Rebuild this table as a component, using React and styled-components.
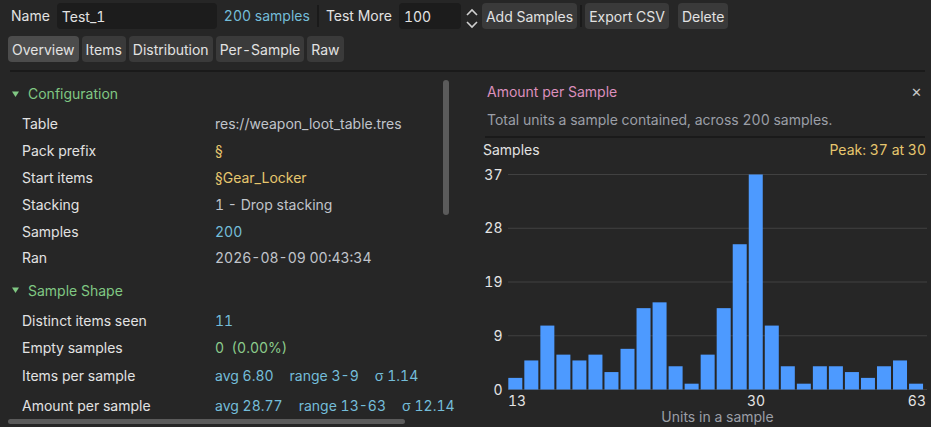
import React from "react";
import styled, { createGlobalStyle } from "styled-components";

const GlobalStyle = createGlobalStyle`
  html, body {
    margin: 0;
    padding: 0;
    background: #262626;
  }
  body {
    font-family: Inter, "Noto Sans", sans-serif;
    font-size: 14px;
    font-variant-numeric: tabular-nums;
    color: #e2e2e2;
  }
`;

const tones = {
  plain: "#e2e2e2",
  dim: "#c0c4cb",
  blue: "#74bdd9",
  yellow: "#e6c66e",
  green: "#8ccc8c",
  pink: "#dc8fbd",
  grey: "#9b9fa7",
};

const Page = styled.div`
  width: 931px;
  height: 427px;
  overflow: hidden;
  display: flex;
  flex-direction: column;
  background: #262626;
`;

const Toolbar = styled.div`
  display: flex;
  align-items: center;
  height: 26px;
  margin-top: 3px;
  padding-left: 11px;
`;

const Label = styled.span`
  margin-left: ${(p) => p.$ml || 0}px;
  color: ${(p) => tones[p.$tone || "plain"]};
  white-space: nowrap;
  line-height: 20px;
`;

const Field = styled.div`
  box-sizing: border-box;
  width: ${(p) => p.$w}px;
  height: 26px;
  margin-left: ${(p) => p.$ml || 0}px;
  padding: 0 5px;
  display: flex;
  align-items: center;
  background: #1c1c1c;
  border-radius: 4px;
  color: #e2e2e2;
`;

const VSep = styled.div`
  width: 2px;
  height: 22px;
  margin-left: ${(p) => p.$ml || 0}px;
  background: #1a1a1a;
`;

const Button = styled.button`
  box-sizing: border-box;
  height: 26px;
  margin-left: ${(p) => p.$ml || 0}px;
  padding: 0 4px;
  border: none;
  border-radius: 4px;
  background: ${(p) => (p.$active ? "#4c4c4c" : "#3a3a3a")};
  color: #e2e2e2;
  font: inherit;
  white-space: nowrap;
  cursor: pointer;
`;

const Spinner = styled.svg`
  display: block;
  margin-left: 3px;
  flex: none;
`;

const Tabs = styled.div`
  display: flex;
  gap: 3px;
  height: 26px;
  margin-top: 7px;
  padding-left: 8px;
`;

const Divider = styled.div`
  height: 2px;
  margin: ${(p) => p.$m};
  background: #1a1a1a;
`;

const Body = styled.div`
  flex: 1;
  display: flex;
  min-height: 0;
`;

const LeftPanel = styled.div`
  position: relative;
  width: 458px;
  overflow: hidden;
  padding-top: 8px;
`;

const SectionHead = styled.div`
  display: flex;
  align-items: center;
  gap: 9px;
  height: 27px;
  margin: ${(p) => (p.$first ? "0 0 4px" : "5px 0 4px")};
  padding-left: 12px;
  color: #80c883;
  white-space: nowrap;
`;

const Row = styled.div`
  display: grid;
  grid-template-columns: 193px auto;
  align-items: center;
  height: ${(p) => p.$h || 26.8}px;
  padding-left: 22px;
  white-space: nowrap;
`;

const ValueGroup = styled.div`
  display: flex;
  gap: 16px;
`;

const VScroll = styled.div`
  position: absolute;
  top: 8px;
  left: 443px;
  width: 6px;
  height: 135px;
  border-radius: 3px;
  background: #5b5b5b;
`;

const HScroll = styled.div`
  position: absolute;
  left: 8px;
  bottom: 3px;
  width: 397px;
  height: 5px;
  border-radius: 3px;
  background: #5b5b5b;
`;

const RightPanel = styled.div`
  flex: 1;
  margin-left: 12px;
  display: flex;
  flex-direction: column;
  padding-top: 10px;
`;

const TitleRow = styled.div`
  display: flex;
  justify-content: space-between;
  align-items: center;
  height: 20px;
  padding: 0 9px 0 17px;
`;

const Close = styled.span`
  color: #c8c8c8;
  font-size: 13px;
`;

const Subtitle = styled.div`
  height: 20px;
  line-height: 20px;
  margin-top: 8px;
  padding-left: 17px;
  color: ${tones.grey};
`;

const ChartHead = styled.div`
  display: flex;
  justify-content: space-between;
  height: 20px;
  line-height: 20px;
  margin-top: 2px;
  padding: 0 5px 0 13px;
`;

const Chart = styled.svg`
  display: block;
  margin-left: 13px;
  font-family: Inter, "Noto Sans", sans-serif;
  font-size: 14px;
`;

const Caption = styled.div`
  height: 14px;
  line-height: 14px;
  margin-top: 2px;
  padding: 0 4px 0 38px;
  text-align: center;
  color: ${tones.grey};
  white-space: nowrap;
`;

const counts = [
  2, 5, 11, 6, 5, 6, 3, 7, 14, 15, 4, 1, 6, 14, 25, 37, 11, 4, 1, 4, 4, 3, 2, 4,
  5, 1,
];

const config = [
  ["Table", "res://weapon_loot_table.tres", "dim"],
  ["Pack prefix", "§", "yellow"],
  ["Start items", "§Gear_Locker", "yellow"],
  ["Stacking", "1 - Drop stacking", "dim"],
  ["Samples", "200", "blue"],
  ["Ran", "2026-08-09 00:43:34", "dim"],
];

function Triangle() {
  return (
    <svg width="7" height="6" viewBox="0 0 7 6">
      <polygon points="0,0.5 7,0.5 3.5,6" fill="#80c883" />
    </svg>
  );
}

function Histogram() {
  const left = 25.3;
  const pitch = 16.03;
  const top = 14.5;
  const base = 229.5;
  const max = 37;
  const ticks = [37, 28, 19, 9, 0];
  return (
    <Chart width="448" height="248" viewBox="0 0 448 248">
      {ticks.map((t, i) => {
        const y = top + ((base - top) * i) / 4;
        return (
          <g key={t}>
            <line x1="25" x2="444" y1={y} y2={y} stroke="#414141" strokeWidth="1" />
            <text x="19.5" y={y + 5} textAnchor="end" fill="#e4e4e4">
              {t}
            </text>
          </g>
        );
      })}
      {counts.map((c, i) => {
        const h = ((base - top) * c) / max;
        return (
          <rect
            key={i}
            x={left + i * pitch}
            y={base - h}
            width="14"
            height={h}
            fill="#4d9aff"
          />
        );
      })}
      <text x="25" y="246" fill="#e4e4e4">13</text>
      <text x="273" y="246" textAnchor="middle" fill="#e4e4e4">30</text>
      <text x="443" y="246" textAnchor="end" fill="#e4e4e4">63</text>
    </Chart>
  );
}

export default function App() {
  return (
    <Page>
      <GlobalStyle />
      <Toolbar>
        <Label>Name</Label>
        <Field $w={160} $ml={7}>Test_1</Field>
        <Label $ml={7} $tone="blue">200 samples</Label>
        <VSep $ml={7} />
        <Label $ml={7}>Test More</Label>
        <Field $w={62} $ml={7}>100</Field>
        <Spinner width="16" height="26" viewBox="0 0 16 26">
          <polyline points="3,12 8,7 13,12" fill="none" stroke="#cfcfcf" strokeWidth="1.6" />
          <polyline points="3,19 8,24 13,19" fill="none" stroke="#cfcfcf" strokeWidth="1.6" />
        </Spinner>
        <Button $ml={2}>Add Samples</Button>
        <VSep $ml={3} />
        <Button $ml={3}>Export CSV</Button>
        <Button $ml={9}>Delete</Button>
      </Toolbar>
      <Tabs>
        <Button $active>Overview</Button>
        <Button>Items</Button>
        <Button>Distribution</Button>
        <Button>Per-Sample</Button>
        <Button>Raw</Button>
      </Tabs>
      <Divider $m="8px 6px 0 10px" />
      <Body>
        <LeftPanel>
          <SectionHead $first>
            <Triangle />
            Configuration
          </SectionHead>
          {config.map(([k, v, tone]) => (
            <Row key={k}>
              <Label>{k}</Label>
              <Label $tone={tone}>{v}</Label>
            </Row>
          ))}
          <SectionHead>
            <Triangle />
            Sample Shape
          </SectionHead>
          <Row>
            <Label>Distinct items seen</Label>
            <Label $tone="blue">11</Label>
          </Row>
          <Row>
            <Label>Empty samples</Label>
            <Label $tone="green">0&nbsp;&nbsp;(0.00%)</Label>
          </Row>
          <Row $h={29}>
            <Label>Items per sample</Label>
            <ValueGroup>
              <Label $tone="blue">avg 6.80</Label>
              <Label $tone="blue">range 3-9</Label>
              <Label $tone="blue">σ 1.14</Label>
            </ValueGroup>
          </Row>
          <Row $h={31}>
            <Label>Amount per sample</Label>
            <ValueGroup>
              <Label $tone="blue">avg 28.77</Label>
              <Label $tone="blue">range 13-63</Label>
              <Label $tone="blue">σ 12.14</Label>
            </ValueGroup>
          </Row>
          <VScroll />
          <HScroll />
        </LeftPanel>
        <RightPanel>
          <TitleRow>
            <Label $tone="pink">Amount per Sample</Label>
            <Close>✕</Close>
          </TitleRow>
          <Subtitle>Total units a sample contained, across 200 samples.</Subtitle>
          <Divider $m="6px 6px 0 15px" />
          <ChartHead>
            <Label>Samples</Label>
            <Label $tone="yellow">Peak: 37 at 30</Label>
          </ChartHead>
          <Histogram />
          <Caption>Units in a sample</Caption>
        </RightPanel>
      </Body>
    </Page>
  );
}
